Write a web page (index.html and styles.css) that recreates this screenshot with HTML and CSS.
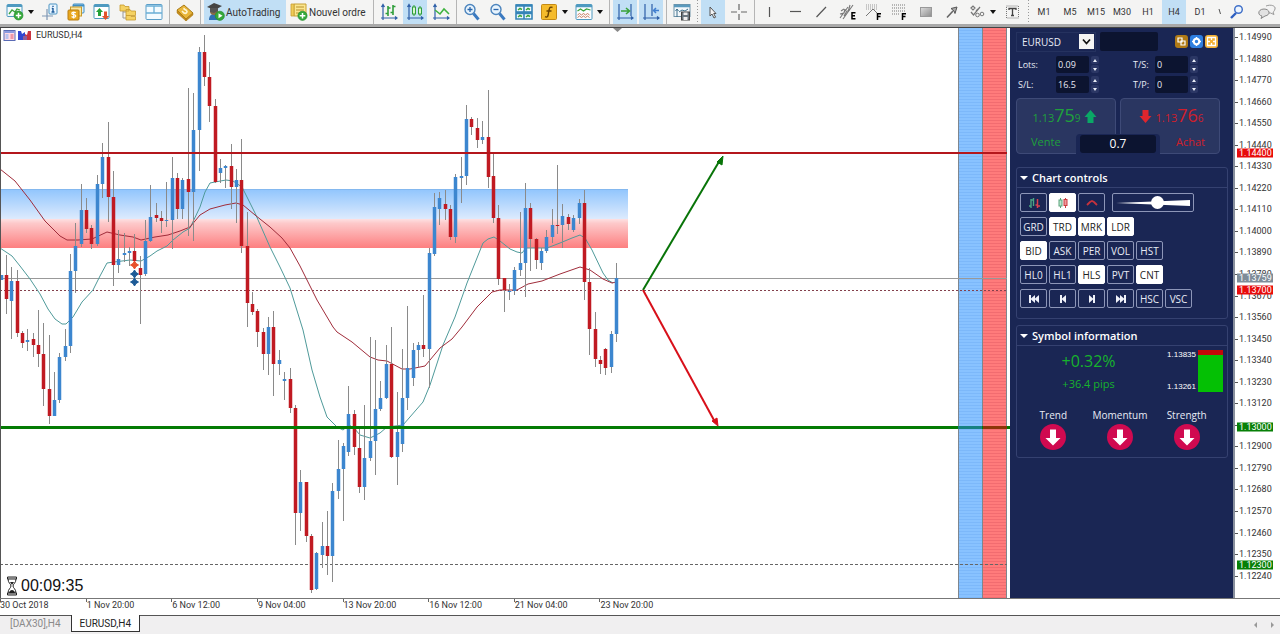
FILE: index.html
```html
<!DOCTYPE html>
<html lang="fr">
<head>
<meta charset="utf-8">
<title>EURUSD,H4</title>
<link rel="stylesheet" href="styles.css">
</head>
<body>
<div class="app">
<header class="toolbar">
  <button class="tool tool-new" aria-label="New chart"><svg class="icon" viewBox="0 0 18 18"><rect x="1" y="1.500" width="15" height="12" rx="1" fill="#f4fafc" stroke="#4f9ac0"/><path d="M1 3h15" stroke="#4f9ac0" stroke-width="2"/><path d="M3 11l3-4 3 2 2-3 3 1" fill="none" stroke="#3aa33a" stroke-width="1.300"/><circle cx="12.500" cy="12.500" r="4.500" fill="#35a83a" stroke="#1f8a2a" stroke-width=".6"/><path d="M12.500 9.800v5.400M9.800 12.500h5.400" stroke="#fff" stroke-width="1.500"/></svg><i class="caret"></i></button>
  <button class="tool" aria-label="Data window"><svg class="icon" viewBox="0 0 18 18"><path d="M6 6v11M1 13h11" stroke="#7e97b5" stroke-width="1.200"/><rect x="8" y="1" width="8" height="10" rx="1" fill="#eaf6ff" stroke="#4b93c2"/><path d="M12 5v4M10.800 5.500H12M10.500 9h3M12 2.800v1.200" stroke="#1d5a9a" stroke-width="1.400"/></svg></button>
  <button class="tool" aria-label="Market watch"><svg class="icon" viewBox="0 0 18 18"><rect x="6" y="1" width="11" height="9" rx="1" fill="#d9effa" stroke="#3f8fc4"/><path d="M6 2.500h11" stroke="#3f8fc4" stroke-width="2"/><rect x="3.500" y="4" width="11" height="9" fill="#fbe7a0" stroke="#c99a28"/><rect x="1" y="7" width="11" height="10" rx="1" fill="#e9a81e" stroke="#b97d12"/><path d="M8.800 9.800c-1-1-4-.9-4 .6 0 1.700 4 .9 4 2.600 0 1.500-3 1.600-4.200.5M6.700 8.500v7" fill="none" stroke="#fff" stroke-width="1.200"/></svg></button>
  <button class="tool" aria-label="Navigator"><svg class="icon" viewBox="0 0 18 18"><rect x="1" y="1.500" width="15" height="14" rx="1" fill="#fff" stroke="#4f9ac0"/><path d="M1 3h15" stroke="#4f9ac0" stroke-width="2"/><path d="M6.500 5l3.500 4H8v4H5V9H3z" fill="#25a13a"/><path d="M12.500 17l-3.500-4h2V8.500h3V13h2.200z" fill="#e2532c"/></svg></button>
  <button class="tool" aria-label="Folders"><svg class="icon" viewBox="0 0 18 18"><path d="M4 7v8h4M4 9h4" fill="none" stroke="#999"/><path d="M1 2h4l1 1.500h4V8H1zM7 6.500h4L12 8h4.500v4.500H7z" fill="#f5d263" stroke="#c79b2c" stroke-width=".8"/><path d="M7 12.500h4l1 1h4.500V17H7z" fill="#f5d263" stroke="#c79b2c" stroke-width=".8"/></svg></button>
  <button class="tool" aria-label="Terminal"><svg class="icon" viewBox="0 0 18 18"><rect x="1" y="1.500" width="16" height="15" rx="1" fill="#f3fbff" stroke="#5a9ec8"/><path d="M1 3h16M1 10h16M9 3v7" stroke="#6aaed6" stroke-width="1.300"/></svg></button>
  <span class="sep"></span>
  <button class="tool" aria-label="Strategy tester"><svg class="icon" viewBox="0 0 18 18"><path d="M1 7l7-5 9 8-7 6z" fill="#e9b63a" stroke="#a97b18"/><path d="M1 7v3l9 8v-2zM10 18l7-6v-2l-7 6z" fill="#c68d1c" stroke="#a97b18" stroke-width=".5"/><path d="M6 8l2 2c2 1 4-1 2.500-2.500S7 6.500 8.500 5" fill="none" stroke="#fff6d2" stroke-width="1.600"/></svg></button>
  <span class="sep"></span>
  <button class="tool labelled auto active"><svg class="icon" viewBox="0 0 18 18"><path d="M2 17c0-4 2-6 5-6s5 2 5 6z" fill="#2f6fb3"/><circle cx="7" cy="8" r="4" fill="#8c6a45"/><path d="M0 4l7-4 8 3-7 4z" fill="#444"/><path d="M3 5v4l4 1 4-2V5z" fill="#555"/><circle cx="12.800" cy="12.800" r="4.600" fill="#35a83a" stroke="#1f8a2a" stroke-width=".6"/><path d="M11.500 10.300l4 2.500-4 2.500z" fill="#fff"/></svg>AutoTrading</button>
  <button class="tool labelled order"><svg class="icon" viewBox="0 0 18 18"><path d="M4 1h12v12H4z" fill="#fbe68e" stroke="#c8a032"/><path d="M1 1h3v12H1z" fill="#f0cc57" stroke="#c8a032" stroke-width=".8"/><path d="M6 4h8M6 7h8M6 10h5" stroke="#b9902d"/><circle cx="12.500" cy="12.800" r="4.600" fill="#35a83a" stroke="#1f8a2a" stroke-width=".6"/><path d="M12.500 10v5.600M9.700 12.800h5.600" stroke="#fff" stroke-width="1.500"/></svg>Nouvel ordre</button>
  <span class="sep"></span>
  <button class="tool" aria-label="Bar chart"><svg class="icon" viewBox="0 0 18 18"><path d="M3 2v13h14M1.500 4L3 1.500 4.500 4M15 13.500l2 1.500-2 1.500M1 15h2v2" fill="none" stroke="#2e5fa8" stroke-width="1.200"/><path d="M8 3v10M5.500 10.500H8M8 5h2.500M13 2v10M13 3.500h2.500M10.500 9.500H13" fill="none" stroke="#2f9e3a" stroke-width="1.600"/></svg></button>
  <button class="tool active" aria-label="Candlesticks"><svg class="icon" viewBox="0 0 18 18"><path d="M3 2v13h14M1.500 4L3 1.500 4.500 4M15 13.500l2 1.500-2 1.500M1 15h2v2" fill="none" stroke="#2e5fa8" stroke-width="1.200"/><path d="M8 2v11M14 3v10" stroke="#2f9e3a"/><rect x="6.500" y="4" width="3" height="7" fill="#d9f7cf" stroke="#2f9e3a"/><rect x="12.500" y="5" width="3" height="6" fill="#d9f7cf" stroke="#2f9e3a"/></svg></button>
  <button class="tool" aria-label="Line chart"><svg class="icon" viewBox="0 0 18 18"><path d="M3 2v13h14M1.500 4L3 1.500 4.500 4M15 13.500l2 1.500-2 1.500M1 15h2v2" fill="none" stroke="#2e5fa8" stroke-width="1.200"/><path d="M3 7l5 4 4-5 5 5" fill="none" stroke="#3fb33f" stroke-width="1.600"/></svg></button>
  <span class="sep"></span>
  <button class="tool" aria-label="Zoom in"><svg class="icon" viewBox="0 0 18 18"><path d="M10.500 10.500l5 6" stroke="#3b7ac0" stroke-width="3"/><circle cx="7" cy="6.500" r="5" fill="#e8f4fd" stroke="#4c84bd" stroke-width="1.400"/><path d="M7 4v5M4.500 6.500h5" stroke="#2a66ac" stroke-width="1.300"/></svg></button>
  <button class="tool" aria-label="Zoom out"><svg class="icon" viewBox="0 0 18 18"><path d="M10.500 10.500l5 6" stroke="#3b7ac0" stroke-width="3"/><circle cx="7" cy="6.500" r="5" fill="#e8f4fd" stroke="#4c84bd" stroke-width="1.400"/><path d="M4.500 6.500h5" stroke="#2a66ac" stroke-width="1.300"/></svg></button>
  <button class="tool" aria-label="Tile windows"><svg class="icon" viewBox="0 0 18 18"><path d="M1 2h8v7H1zM9 2h8v7H9zM1 9h8v7H1zM9 9h8v7H9z" fill="#f1faff" stroke="#3584b8" stroke-width="1.600"/><path d="M1 2.500h16M1 10h16" stroke="#3584b8" stroke-width="2.400"/><path d="M3 7l2-1.500 2 1M11 7l2-1.500 2 1M3 14l2-1.500 2 1M11 14l2-1.500 2 1" fill="none" stroke="#3aa33a" stroke-width="1.500"/></svg></button>
  <button class="tool tool-menu" aria-label="Indicators"><svg class="icon" viewBox="0 0 18 18"><rect x="1.500" y="1.500" width="15" height="15" rx="1" fill="#f5bb2b" stroke="#c58a14"/><path d="M12.500 4.500c-2-1-3 0-3.300 2L8 12.500c-.3 1.500-1.500 2-3 1.200M6.500 8h5" fill="none" stroke="#6b4300" stroke-width="1.400"/></svg><i class="caret"></i></button>
  <button class="tool tool-menu" aria-label="Templates"><svg class="icon" viewBox="0 0 18 18"><rect x="1" y="1.500" width="16" height="15" rx="1" fill="#fbfdff" stroke="#4f9ac0"/><path d="M1 3h16" stroke="#4f9ac0" stroke-width="2.500"/><path d="M2.500 8l3-2 3 2 3-2 4 1" fill="none" stroke="#3aa33a" stroke-width="1.200"/><path d="M2.500 12l2-1.500 2 1.500 2-1.500 2 1.500 2-1.500 2 1.500M2.500 14.500l2-1.500 2 1.500 2-1.500 2 1.500 2-1.500 2 1.500" fill="none" stroke="#c77a5b"/></svg><i class="caret"></i></button>
  <span class="sep"></span>
  <button class="tool active" aria-label="Auto scroll"><svg class="icon" viewBox="0 0 18 18"><path d="M3 1v14h14M15 13.500l2 1.500-2 1.500M1 15h2v2M15 1v12" fill="none" stroke="#2e5fa8" stroke-width="1.200"/><path d="M5 8h8M10 5l3.500 3-3.500 3" fill="none" stroke="#3aa33a" stroke-width="1.600"/></svg></button>
  <button class="tool active" aria-label="Chart shift"><svg class="icon" viewBox="0 0 18 18"><path d="M3 1v14h14M15 13.500l2 1.500-2 1.500M1 15h2v2M10 1v12" fill="none" stroke="#2e5fa8" stroke-width="1.200"/><path d="M11.500 7.500H17M14 5l-2.500 2.500L14 10" fill="none" stroke="#3f7ed0" stroke-width="1.500"/></svg></button>
  <span class="sep"></span>
  <button class="tool" aria-label="Save picture"><svg class="icon" viewBox="0 0 18 18"><rect x="1" y="1.500" width="16" height="12" fill="#f4f8fb" stroke="#6e93a9"/><path d="M1 3h16" stroke="#5b9abd" stroke-width="2.500"/><path d="M4 6v8M2.500 8L4 6l1.500 2M6 9l3-2 3 1 3-2" fill="none" stroke="#3c6e8a"/><rect x="8.500" y="9" width="8" height="8" fill="#6b7780" stroke="#444"/><path d="M10.500 9.500h4V12h-4zM10.500 14h4v3h-4z" fill="#eee"/></svg></button>
  <span class="sep dotted"></span>
  <button class="tool active" aria-label="Cursor"><svg class="icon" viewBox="0 0 18 18"><path d="M6 4v9l2-2 2 4 1.600-.8-1.900-3.700H12z" fill="#f5f5f5" stroke="#555"/></svg></button>
  <button class="tool" aria-label="Crosshair"><svg class="icon" viewBox="0 0 18 18"><path d="M9 1v6M9 11v6M1 9h6M11 9h6" stroke="#666" stroke-width="1.200"/></svg></button>
  <span class="sep"></span>
  <button class="tool" aria-label="Vertical line"><svg class="icon" viewBox="0 0 18 18"><path d="M8.500 4v10" stroke="#555" stroke-width="1.200"/></svg></button>
  <button class="tool" aria-label="Horizontal line"><svg class="icon" viewBox="0 0 18 18"><path d="M3 8.500h11" stroke="#555" stroke-width="1.200"/></svg></button>
  <button class="tool" aria-label="Trend line"><svg class="icon" viewBox="0 0 18 18"><path d="M3.500 14L13 4" stroke="#555" stroke-width="1.200"/></svg></button>
  <button class="tool" aria-label="Channel"><svg class="icon" viewBox="0 0 18 18"><path d="M1 15L9 4M4 16L14 2M1 11l4-1 1-4M5 13l3-5 3-1M9 9l2-7M2 8l3-2" fill="none" stroke="#777" stroke-width="1.100"/><path d="M16.500 9.700H13v6h3.500M13 12.700h3" fill="none" stroke="#000" stroke-width="1.500"/></svg></button>
  <button class="tool" aria-label="Fibonacci fan"><svg class="icon" viewBox="0 0 18 18"><path d="M1 2h12M1 4h12M1 6h12" stroke="#999" stroke-dasharray="1 1"/><path d="M1 13L8 6l4 4" fill="none" stroke="#777"/><path d="M16 10.700h-3.500V17M12.500 13.500h3" fill="none" stroke="#000" stroke-width="1.500"/></svg></button>
  <button class="tool" aria-label="Fibonacci"><svg class="icon" viewBox="0 0 18 18"><path d="M1 2h13M1 5h13M1 8h13M1 11h8" stroke="#777" stroke-dasharray="1 1"/><path d="M15 10.700h-3.500V17M11.500 13.500h3" fill="none" stroke="#000" stroke-width="1.500"/></svg></button>
  <button class="tool" aria-label="Rectangle"><svg class="icon" viewBox="0 0 18 18"><defs><linearGradient id="gr" x2="1" y2="1"><stop stop-color="#ddd"/><stop offset="1" stop-color="#8c8c8c"/></linearGradient></defs><rect x="3.500" y="4.500" width="11" height="9" fill="url(#gr)" stroke="#999"/></svg></button>
  <button class="tool" aria-label="Arrow"><svg class="icon" viewBox="0 0 18 18"><path d="M4 14.500L10 8" stroke="#666" stroke-width="1.600"/><path d="M8 5.500L14 4l-2 6.500L11 8z" fill="#aaa" stroke="#555"/></svg></button>
  <button class="tool tool-menu" aria-label="Objects"><svg class="icon" viewBox="0 0 18 18"><path d="M3 9l2.500 3L12 4M3 5l2-2 2 2-2 2zM8 8l2-2" fill="none" stroke="#777" stroke-width="1.200"/><circle cx="9.500" cy="12" r="1.800" fill="none" stroke="#777"/><circle cx="14" cy="11" r="1.800" fill="none" stroke="#777"/></svg><i class="caret"></i></button>
  <button class="tool" aria-label="Text"><svg class="icon" viewBox="0 0 18 18"><rect x="2.500" y="3" width="12" height="12" fill="none" stroke="#777" stroke-dasharray="1 1"/><path d="M5 7V5.500h7V7M8.500 5.500v7M7 12.500h3" fill="none" stroke="#444" stroke-width="1.300"/></svg></button>
  <span class="sep dotted"></span>
  <button class="tool">M1</button><button class="tool">M5</button><button class="tool">M15</button><button class="tool">M30</button><button class="tool">H1</button><button class="tool active">H4</button><button class="tool">D1</button>
  <button class="tool week" aria-label="W1"><svg viewBox="0 0 5 9"><path d="M1 1l1.500 5" stroke="#555"/></svg></button>
  <button class="tool search" aria-label="Search"><svg class="icon" viewBox="0 0 18 18"><path d="M8 10l-5 5" stroke="#2d5fc0" stroke-width="2.400"/><circle cx="10.500" cy="6.500" r="3.800" fill="#eef6ff" stroke="#4372c9" stroke-width="1.500"/></svg></button>
  <button class="tool chat" aria-label="Chat"><svg class="icon" viewBox="0 0 18 18"><path d="M8 3c5-2 10 0 9 3s-2 3-2 3l1 2.500L12.500 10H9" fill="#f3f3f3" stroke="#999"/><path d="M6 6c-6 0-7 6-2 7l-1 2.500L7 13c6-1 5-7-1-7z" fill="#e2e2e2" stroke="#888"/></svg></button>
</header>

<main class="workspace">
  <section class="chart">
    <svg class="plot" viewBox="0 28 1010 570" preserveAspectRatio="none">
      <defs>
        <linearGradient id="zone" x2="0" y2="1"><stop stop-color="#90c5fd"/><stop offset=".5" stop-color="#dceafd"/><stop offset=".51" stop-color="#fde0e2"/><stop offset=".58" stop-color="#fdc9ca"/><stop offset="1" stop-color="#fd7f80"/></linearGradient>
        <pattern id="stripeB" width="24" height="3" patternUnits="userSpaceOnUse"><rect width="24" height="3" fill="#88c2ff"/><rect width="24" height="1" fill="#7cb8fa"/></pattern>
        <pattern id="stripeR" width="24" height="3" patternUnits="userSpaceOnUse"><rect width="24" height="3" fill="#ff7b7b"/><rect width="24" height="1" fill="#f26c70"/></pattern>
      </defs>
      <rect x="0" y="189" width="628" height="59" fill="url(#zone)"/>
      <path d="M0 189.500H628" stroke="#84b8ef"/>
      <rect x="958" y="28" width="24" height="570" fill="url(#stripeB)"/>
      <rect x="983" y="28" width="24" height="570" fill="url(#stripeR)"/>
      <path d="M958.500 28V598M982.500 28V598M1006.500 28V598" stroke="#7f868e"/>
      <path d="M0 278.500H1007" stroke="#999"/>
      <path d="M0 290.500H1007" stroke="#83404c" stroke-dasharray="2 2"/>
      <path d="M0 564.500H1007" stroke="#666" stroke-dasharray="3 2"/>
      <path class="ma" stroke="#4f9a9a" d="M0 248L12 256 20 266 30 279 40 294 48 309 55 319 62 324 66 324 73 317 82 302 93 290 100 276 107 263 114 262 130 260 141 261 150 256 157 251 167 246 173 240 183 232 190 228 200 207 205 192 210 183 215 182 226 180 233 181 242 187 247 197 255 213 270 247 280 267 290 288 303 330 312 370 320 397 327 417 337 427 343 430 349 425 354 428 360 435 370 438 380 433 387 427 403 425 423 402 430 385 443 345 455 317 467 283 477 258 483 243 488 239 494 237 500 241 510 249 517 252 522 253 526 248 547 248 560 243 572 238 580 235 585 238 592 250 603 273 608 280 613 283"/>
      <path class="ma" stroke="#a02c3a" d="M0 169L15 181 30 200 45 221 60 236 67 240 78 240 92 239 107 232 120 235 133 237 141 240 155 237 168 235 180 231 190 227 200 215 210 209 225 205 236 203 243 205 255 215 270 227 282 238 290 248 300 266 317 300 333 327 337 332 352 342 370 357 378 360 387 361 402 369 410 369 425 366 440 348 452 339 462 327 477 307 492 292 500 290 517 290 528 284 542 281 560 274 580 267 590 270 603 279 612 283 616 282"/>
      <g id="candles"></g>
      <path d="M0 153H1007" stroke="#b4161c" stroke-width="2"/>
      <path d="M0 427.500H1010" stroke="#047b04" stroke-width="3"/>
      <path d="M958 427.500H982" stroke="#168183" stroke-width="3"/>
      <path d="M983 427.500H1007" stroke="#8b3508" stroke-width="3"/>
      <path d="M134.500 261l1.500 2.500 2.500 1.500-2.500 1.500-1.500 2.500-1.500-2.500-2.500-1.500 2.500-1.500z" fill="#e8502a" stroke="#e8502a"/>
      <path d="M134.500 270l1.500 2.500 2.500 1.500-2.500 1.500-1.500 2.500-1.500-2.500-2.500-1.500 2.500-1.500zM134.500 278l1.500 2.500 2.500 1.500-2.500 1.500-1.500 2.500-1.500-2.500-2.500-1.500 2.500-1.500z" fill="#1c5a96" stroke="#1c5a96"/>
      <path d="M643 290L720 160" stroke="#087408" stroke-width="2"/><path d="M723 156l-1 9-5-3z" fill="#087408" stroke="#087408"/>
      <path d="M643 290L715 422" stroke="#d8101a" stroke-width="2"/><path d="M718 426l-6-5 5-3z" fill="#d8101a" stroke="#d8101a"/>
      <path d="M613 28h9l-4.500 4z" fill="#888"/>
      <path d="M.5 28V598" stroke="#555"/>
    </svg>
    <div class="chart-title">
      <svg class="mini" viewBox="0 0 12 11"><rect x=".5" y=".5" width="11" height="10" fill="#ffd9e4" stroke="#5a6bb5"/><path d="M1 2h10" stroke="#8b9be0" stroke-width="2"/><path d="M2 4h3v5H2z" fill="#b7c2f0"/><path d="M7 4h3v5H7z" fill="#ee98a8"/></svg>
      <svg class="mini" viewBox="0 0 13 11"><path d="M0 1h3l1 3 3-2v8H0z" fill="#3146d0"/><path d="M7 4l2 1 1-4h3v9H7z" fill="#c93440"/><path d="M5 6h4v4H5z" fill="#8d5d9a"/></svg>
      <span>EURUSD,H4</span>
    </div>
    <div class="timer">
      <svg class="glass" viewBox="0 0 12 20"><path d="M1.500 1h9v2h-9zM1.500 17h9v2h-9z" fill="#ddd" stroke="#222"/><path d="M2 3c0 4 3 5 3 7s-3 3-3 7M10 3c0 4-3 5-3 7s3 3 3 7" fill="none" stroke="#222"/><path d="M3 17c0-2 2-3 3-3s3 1 3 3zM4 6h4l-2 3z" fill="#222"/></svg>
      <span>00:09:35</span>
    </div>
  </section>

  <aside class="panel">
    <div class="deal">
      <div class="deal-head">
        <div class="picker"><select aria-label="Symbol"><option>EURUSD</option></select><svg class="picker-arrow" viewBox="0 0 15 15"><rect width="15" height="15" fill="#f4f4f4"/><path d="M4 5.500l3.500 4 3.500-4" fill="none" stroke="#111" stroke-width="1.700"/></svg></div>
        <input class="field comment" aria-label="Comment">
        <div class="chips">
          <button class="chip brown" aria-label="Copy"><svg viewBox="0 0 13 13"><path d="M3 3h4v4H3zM6 6h4v4H6z" fill="none" stroke="#fff" stroke-width="1.200"/></svg></button>
          <button class="chip blue" aria-label="Settings"><svg viewBox="0 0 13 13"><circle cx="6.500" cy="6.500" r="2.700" fill="none" stroke="#fff" stroke-width="2"/><path d="M6.500 2v2M6.500 9v2M2 6.500h2M9 6.500h2" stroke="#fff" stroke-width="1.500"/></svg></button>
          <button class="chip gold" aria-label="Resize"><svg viewBox="0 0 13 13"><path d="M2.500 2.500h8v8h-8z" fill="none" stroke="#fff" stroke-width="1.300"/><path d="M6.500 2v3M6.500 8v3M2 6.500h3M8 6.500h3" stroke="#fff" stroke-width="1.300"/></svg></button>
        </div>
      </div>
      <div class="fields">
        <label for="lots">Lots:</label><span class="spin"><input class="field" id="lots" value="0.09"><span class="steps"><button aria-label="Lots up"></button><button class="down" aria-label="Lots down"></button></span></span>
        <label for="ts">T/S:</label><span class="spin"><input class="field" id="ts" value="0"><span class="steps"><button aria-label="T/S up"></button><button class="down" aria-label="T/S down"></button></span></span>
        <label for="sl">S/L:</label><span class="spin"><input class="field" id="sl" value="16.5"><span class="steps"><button aria-label="S/L up"></button><button class="down" aria-label="S/L down"></button></span></span>
        <label for="tp">T/P:</label><span class="spin"><input class="field" id="tp" value="0"><span class="steps"><button aria-label="T/P up"></button><button class="down" aria-label="T/P down"></button></span></span>
      </div>
      <div class="quotes">
        <button class="quote sell"><span class="price">1.13<b>75</b><small>9</small><svg class="way" viewBox="0 0 12 13"><path d="M6 0l6 7H9v6H3V7H0z" fill="#0aa866"/></svg></span><span class="side">Vente</span></button>
        <button class="quote buy"><span class="price"><svg class="way" viewBox="0 0 12 13"><path d="M6 13l6-7H9V0H3v6H0z" fill="#e0262e"/></svg>1.13<b>76</b><small>6</small></span><span class="side">Achat</span></button>
        <output class="spread"><span>0.7</span></output>
      </div>
    </div>

    <section class="box">
      <h2>Chart controls</h2>
      <div class="controls">
        <div class="keys">
          <button class="key" aria-label="Bars"><svg viewBox="0 0 14 12"><path d="M4 2v9M4 3h2.500M2 9h2M6.500 1v8" fill="none" stroke="#4aa583" stroke-width="1.400"/><path d="M10.500 2v9M8.500 8h2M10.500 9H13" fill="none" stroke="#d8404e" stroke-width="1.500"/></svg></button>
          <button class="key on" aria-label="Candles"><svg viewBox="0 0 14 12"><path d="M4.500 1v10" stroke="#5aa37c"/><rect x="3" y="3" width="3" height="6" fill="#bfe5cc" stroke="#5aa37c"/><path d="M9.500 1v10" stroke="#cc3b40"/><rect x="8" y="2.500" width="3" height="6" fill="#ef9a9d" stroke="#cc3b40"/></svg></button>
          <button class="key" aria-label="Line"><svg viewBox="0 0 14 12"><path d="M2 8l3-3 2-1 2 1 3 3" fill="none" stroke="#c8323d" stroke-width="1.800"/></svg></button>
          <span class="slider"><svg class="wedge" viewBox="0 0 76 6" preserveAspectRatio="none"><path d="M0 3L76 0v6z" fill="#fff"/></svg><input type="range" aria-label="Zoom" min="0" max="100" value="58"></span>
        </div>
        <div class="keys"><button class="key">GRD</button><button class="key on">TRD</button><button class="key on">MRK</button><button class="key on">LDR</button></div>
        <div class="keys"><button class="key on">BID</button><button class="key">ASK</button><button class="key">PER</button><button class="key">VOL</button><button class="key">HST</button></div>
        <div class="keys"><button class="key">HL0</button><button class="key">HL1</button><button class="key on">HLS</button><button class="key">PVT</button><button class="key on">CNT</button></div>
        <div class="keys">
          <button class="key" aria-label="First"><svg viewBox="0 0 14 12"><path d="M2 2h2v3.500L8 2v3.500L12 2v8L8 6.500V10L4 6.500V10H2z" fill="#f0f2fa"/></svg></button>
          <button class="key" aria-label="Previous"><svg viewBox="0 0 14 12"><path d="M4 2h2v3.500L10 2v8L6 6.500V10H4z" fill="#f0f2fa"/></svg></button>
          <button class="key" aria-label="Next"><svg viewBox="0 0 14 12"><path d="M10 2H8v3.500L4 2v8l4-3.500V10h2z" fill="#f0f2fa"/></svg></button>
          <button class="key" aria-label="Last"><svg viewBox="0 0 14 12"><path d="M12 2h-2v3.500L6 2v3.500L2 2v8l4-3.500V10l4-3.500V10h2z" fill="#f0f2fa"/></svg></button>
          <button class="key">HSC</button><button class="key">VSC</button>
        </div>
      </div>
    </section>

    <section class="box">
      <h2>Symbol information</h2>
      <div class="info">
        <div class="change"><strong>+0.32%</strong><span>+36.4 pips</span></div>
        <div class="range"><span>1.13835</span><span>1.13261</span></div>
        <div class="gauge"></div>
      </div>
      <div class="signals">
        <div class="signal">Trend<svg viewBox="0 0 26 26"><circle cx="13" cy="13" r="13" fill="#d00a50"/><path d="M13 21.500L5.500 14H10V5.500h6V14h4.500z" fill="#fff"/></svg></div>
        <div class="signal">Momentum<svg viewBox="0 0 26 26"><circle cx="13" cy="13" r="13" fill="#d00a50"/><path d="M13 21.500L5.500 14H10V5.500h6V14h4.500z" fill="#fff"/></svg></div>
        <div class="signal">Strength<svg viewBox="0 0 26 26"><circle cx="13" cy="13" r="13" fill="#d00a50"/><path d="M13 21.500L5.500 14H10V5.500h6V14h4.500z" fill="#fff"/></svg></div>
      </div>
    </section>
  </aside>

  <div class="scale">
    <ol class="prices">
      <li>1.14990</li><li>1.14880</li><li>1.14770</li><li>1.14660</li><li>1.14550</li><li>1.14440</li><li>1.14330</li><li>1.14220</li><li>1.14110</li><li>1.14000</li><li>1.13890</li><li>1.13780</li><li>1.13670</li><li>1.13560</li><li>1.13450</li><li>1.13340</li><li>1.13230</li><li>1.13120</li><li class="covered"></li><li>1.12900</li><li>1.12790</li><li>1.12680</li><li>1.12570</li><li>1.12460</li><li>1.12350</li><li>1.12240</li>
    </ol>
    <span class="tag red" style="top:21.900%">1.14400</span>
    <span class="tag grey" style="top:43.900%">1.13759</span>
    <span class="tag red" style="top:46%">1.13700</span>
    <span class="tag green" style="top:70%">1.13000</span>
    <span class="tag green" style="top:94.200%">1.12300</span>
  </div>
</main>

<div class="dates"><span>30 Oct 2018</span><span>1 Nov 20:00</span><span>6 Nov 12:00</span><span>9 Nov 04:00</span><span>13 Nov 20:00</span><span>16 Nov 12:00</span><span>21 Nov 04:00</span><span>23 Nov 20:00</span></div>

<nav class="tabs">
  <a class="tab" href="#dax">[DAX30],H4</a><a class="tab current" href="#eurusd">EURUSD,H4</a>
  <span class="pager"><button aria-label="Previous tab"></button><button class="next" aria-label="Next tab"></button></span>
</nav>
</div>
<script src="chart.js"></script>
</body>
</html>
```
FILE: styles.css
```css
* { box-sizing: border-box; }
body { margin: 0; font: 9px/11px Roboto, "Liberation Sans", sans-serif; color: #333; background: #fff; }
button, input, select { font: inherit; color: inherit; margin: 0; padding: 0; border: 0; background: none; }
svg { display: block; }
.app { display: flex; flex-direction: column; height: 100vh; overflow: hidden; }

.toolbar { display: flex; flex: none; align-items: stretch; gap: 2px; height: 28px; background: #f4f4f3; border-bottom: 1px solid #444; box-shadow: inset 0 -3px #a9a9a9; padding-bottom: 3px; overflow: hidden; }
.tool { display: flex; flex: none; align-items: center; justify-content: center; width: 24px; }
.tool.active { background: #c1dff5; }
.icon { flex: none; width: 18px; height: 18px; }
.caret { flex: none; border: 3px solid transparent; border-top: 4px solid #111; border-bottom: 0; margin-left: 4px; }
.tool-new { width: 36px; justify-content: flex-start; padding-left: 6px; }
.tool-menu { width: 33px; justify-content: flex-start; padding-left: 2px; }
.labelled { font-size: 10px; gap: 1px; justify-content: flex-start; }
.auto { width: 82px; padding-left: 3px; }
.order { width: 82px; padding-left: 2px; }
.sep { flex: none; width: 1px; margin: 0 1px; background: #b5b5b5; }
.sep.dotted { background: repeating-linear-gradient(#999 0 1px, #f4f4f3 1px 3px); }
.week { width: 5px; margin-left: 4px; }
.week svg { width: 5px; height: 9px; }
.search { margin-left: auto; }
.chat { margin: 0 1px 0 4px; }

.workspace { display: flex; flex: 1; min-height: 0; }
.chart { position: relative; flex: 1; min-width: 0; }
.plot { width: 100%; height: 100%; }
.ma { fill: none; stroke-width: 1; }
.wick { stroke: #8a8a8a; stroke-width: 1; }
.chart-title { position: absolute; top: 2px; left: 3px; display: flex; align-items: center; gap: 2px; }
.chart-title span { margin-left: 3px; }
.mini { width: 13px; height: 11px; }
.timer { position: absolute; left: 6px; bottom: 2px; display: flex; align-items: center; gap: 3px; font: 16px/20px "Liberation Sans", sans-serif; color: #111; }
.glass { width: 12px; height: 20px; }

.panel { flex: none; width: 225px; padding: 4px 5px 0 6px; background: #1a2654; border-right: 2px solid #888f9d; font: 9px/12px "Open Sans", sans-serif; color: #e8ebf5; }
.deal { padding-right: 8px; }
.deal-head { display: flex; align-items: center; height: 19px; gap: 4px; }
.picker { position: relative; display: flex; align-items: center; width: 80px; padding: 2px; border: 1px solid #25325f; }
.picker select { appearance: none; width: 100%; padding-left: 3px; font-size: 10px; line-height: 14px; }
.picker-arrow { position: absolute; right: 1px; width: 15px; height: 15px; pointer-events: none; }
.field { height: 17px; background: #0c1430; border: 0; border-radius: 2px; }
.comment { width: 58px; height: 19px; }
.chips { display: flex; gap: 2px; margin-left: auto; margin-right: 2px; }
.chip { width: 13px; height: 13px; border-radius: 3px; }
.brown { background: #b07a16; }
.blue { background: #2f7fe0; }
.gold { background: #f2b136; }
.fields { display: grid; grid-template-columns: 38px 77px 22px 1fr; gap: 3px 0; margin-top: 5px; padding-left: 2px; align-items: center; }
.fields .spin { display: flex; gap: 2px; }
.spin .field { width: 33px; padding-left: 2px; }
.steps { display: flex; flex-direction: column; gap: 1px; }
.steps button { width: 8px; height: 8px; background: #2b3765; border-radius: 2px; display: grid; place-items: center; }
.steps button::after { content: ""; border: 2px solid transparent; border-bottom: 3px solid #e8ebf5; border-top: 0; }
.steps .down::after { border-bottom: 0; border-top: 3px solid #e8ebf5; }
.quotes { position: relative; display: grid; grid-template-columns: 1fr 1fr; gap: 4px; margin-top: 5px; }
.quote { display: flex; flex-direction: column; justify-content: space-between; height: 56px; padding: 6px 8px 3px; background: #2a3661; border: 1px solid #3e4a77; border-radius: 4px; }
.sell { color: #1fa03c; align-items: flex-start; }
.buy { color: #cf1f2c; align-items: flex-end; }
.price { display: flex; align-items: baseline; justify-content: center; width: 100%; font-size: 11px; line-height: 20px; }
.price b { font-size: 18px; font-weight: 400; }
.price small { font-size: 10px; }
.way { width: 13px; height: 13px; margin: 0 3px; align-self: center; }
.side { font-size: 11px; line-height: 16px; padding: 0 6px; }
.spread { position: absolute; bottom: 0; left: 50%; translate: -50% 0; width: 84px; height: 20px; padding: 1px 4px 0; background: #1a2654; border-radius: 4px 4px 0 0; }
.spread span { display: block; background: #0c1430; border-radius: 3px; font-size: 12px; line-height: 18px; text-align: center; color: #fff; }

.box { border: 1px solid #354170; border-radius: 3px; margin-top: 13px; }
.box + .box { margin-top: 6px; }
.box h2 { display: flex; align-items: center; gap: 4px; margin: 0; padding-left: 3px; height: 20px; border-bottom: 1px solid #354170; font-size: 11px; line-height: 18px; font-weight: 600; color: #fff; }
.box h2::before { content: ""; border: 4px solid transparent; border-top: 4px solid #fff; border-bottom: 0; }
.controls { display: flex; flex-direction: column; gap: 5px; padding: 5px 3px 10px; }
.keys { display: flex; gap: 2px; }
.key { display: grid; place-items: center; width: 27px; height: 19px; border: 1px solid #8d96b8; border-radius: 2px; font-size: 10px; line-height: 16px; }
.key svg { width: 14px; height: 12px; }
.key.on { background: #fff; border-color: #fff; color: #222; }
.slider { position: relative; display: flex; align-items: center; width: 82px; height: 19px; margin-left: 5px; padding: 0 3px; border: 1px solid #8d96b8; border-radius: 2px; }
.wedge { width: 100%; height: 6px; }
.slider input { position: absolute; inset: 0 3px; width: calc(100% - 6px); height: 100%; appearance: none; }
.slider input::-webkit-slider-thumb { appearance: none; width: 13px; height: 13px; border-radius: 50%; background: #fff; }
.info { display: flex; gap: 2px; padding: 4px 4px 0 3px; height: 46px; }
.change { flex: 1; display: flex; flex-direction: column; align-items: center; gap: 4px; padding-right: 8px; color: #17b32d; font-size: 11px; line-height: 16px; }
.change strong { font-size: 16px; font-weight: 400; line-height: 22px; }
.range { display: flex; flex-direction: column; justify-content: space-between; font: 8px/10px "Liberation Sans", sans-serif; color: #fff; }
.gauge { width: 25px; background: linear-gradient(#c40808 5px, #04c004 5px); }
.signals { display: grid; grid-template-columns: repeat(3, 1fr); padding: 16px 7px 7px 3px; font-size: 10px; line-height: 14px; }
.signal { display: flex; flex-direction: column; align-items: center; gap: 2px; }
.signal svg { width: 26px; height: 26px; }

.scale { position: relative; flex: none; width: 45px; }
.prices { display: flex; flex-direction: column; justify-content: space-between; height: 100%; margin: 0; padding: 4px 0 16px; list-style: none; }
.prices li { display: flex; align-items: center; gap: 1px; height: 11px; }
.prices li::before { content: ""; width: 3px; height: 1px; background: #555; }
.tag { position: absolute; left: 2px; width: 36px; padding-left: 2px; line-height: 9px; color: #fff; translate: 0 -50%; }
.red { background: #e80c0c; }
.grey { background: #7e8c98; }
.green { background: #078007; }

.dates { display: flex; flex: none; height: 17px; border-top: 1px solid #777; }
.dates span { flex: 0 0 6.690%; padding: 1px 0 0 1px; white-space: nowrap; background: linear-gradient(#666, #666) 0 0 / 1px 3px no-repeat; }
.dates span:first-child { padding-left: 0; }
.tabs { display: flex; flex: none; height: 19px; background: #f0eff0; border-top: 1px solid #555; font-size: 10px; line-height: 15px; }
.tab { padding: 0 10px; height: 16px; color: #8a8a8a; text-decoration: none; }
.tab.current { margin-top: -1px; height: 17px; padding: 1px 8px 0; background: #fff; color: #222; border: 1px solid #333; border-top: 0; }
.pager { display: flex; align-items: center; gap: 14px; margin-left: auto; padding-right: 6px; }
.pager button { border: 3px solid transparent; border-right: 3px solid #999; border-left: 0; }
.pager .next { border-right: 0; border-left: 3px solid #999; }
```
FILE: chart.js
```js
// Each candle: high, body top, body bottom, low, direction (u = up, d = down)
const candles = `275,275,280,280,u 255,275,299,314,d 267,281,301,339,u 270,281,333,337,d 331,333,343,348,d
329,340,342,351,u 333,339,345,357,d 310,345,354,367,d 323,354,389,406,d 335,389,416,424,d 372,400,416,416,u
353,357,400,403,u 329,346,357,361,u 254,271,346,353,u 223,246,271,293,u 184,210,244,247,u 198,210,229,233,d
225,228,244,249,d 175,184,244,246,u 143,157,184,198,u 122,157,197,222,d 171,197,265,286,d 230,259,265,273,u
233,253,255,262,u 247,251,253,266,u 234,251,261,265,d 256,268,275,324,d 220,241,274,276,u 185,217,241,242,u
203,215,218,222,d 211,218,221,233,d 182,220,221,227,u 157,178,220,249,u 173,178,209,219,d 178,180,209,219,u
88,179,192,236,d 93,130,192,241,u 47,52,130,171,u 35,52,77,86,d 62,77,106,122,d 99,106,182,183,d
159,168,173,183,u 165,166,168,188,u 144,166,187,209,d 169,180,187,223,u 139,180,246,253,d 212,246,303,327,d
292,304,312,315,d 309,311,332,347,d 328,332,354,370,d 317,327,354,375,u 311,327,364,396,d 350,360,364,375,u
372,379,381,400,u 368,379,408,413,d 405,408,513,545,d 470,482,513,531,u 482,482,536,542,d 534,536,590,593,d
552,553,589,590,u 522,546,555,568,u 511,546,556,575,d 483,491,556,582,u 440,469,491,499,u 443,446,469,521,u
386,414,452,456,u 410,414,447,455,d 427,448,487,493,d 405,458,487,500,u 337,441,458,461,u 340,409,441,475,u
381,398,409,411,u 345,364,398,399,u 327,364,457,458,d 392,432,457,485,u 349,398,444,452,u 306,368,398,410,u
343,350,378,386,u 342,345,350,367,u 295,345,349,357,d 248,253,349,388,u 193,207,254,256,u 192,198,209,225,u
190,204,209,220,d 205,209,237,240,d 174,177,237,243,u 157,176,178,203,u 105,119,176,185,u 117,119,127,135,d
118,128,140,148,d 121,137,140,144,u 90,137,177,188,d 153,176,218,223,d 205,218,279,285,d 278,278,290,312,d
284,291,292,300,u 267,270,291,295,u 212,263,270,276,u 183,208,263,297,u 203,208,239,271,d 238,239,260,269,d
248,251,263,270,u 230,237,251,253,u 209,225,237,243,u 165,225,226,234,d 204,216,225,248,u 214,217,224,230,d
215,218,230,232,u 199,203,218,224,u 190,203,282,300,d 268,282,329,355,d 312,329,359,367,d 356,360,364,374,d
348,349,368,375,d 331,334,367,373,u 263,278,334,342,u`.split(/\s+/).map((c) => c.split(','));

const step = 5.352;
const colors = { u: '#3c86cf', d: '#c01a22' };

document.getElementById('candles').innerHTML = candles.map(([high, top, bottom, low, dir], i) => {
  const x = 1 + step * i;
  const wickX = Math.floor(x) + 0.5;
  return `<path class="wick" d="M${wickX} ${high}V${low}"/>` +
    `<rect x="${wickX - 1.75}" y="${top}" width="3.500" height="${Math.max(1, bottom - top)}" fill="${colors[dir]}"/>`;
}).join('');
```
